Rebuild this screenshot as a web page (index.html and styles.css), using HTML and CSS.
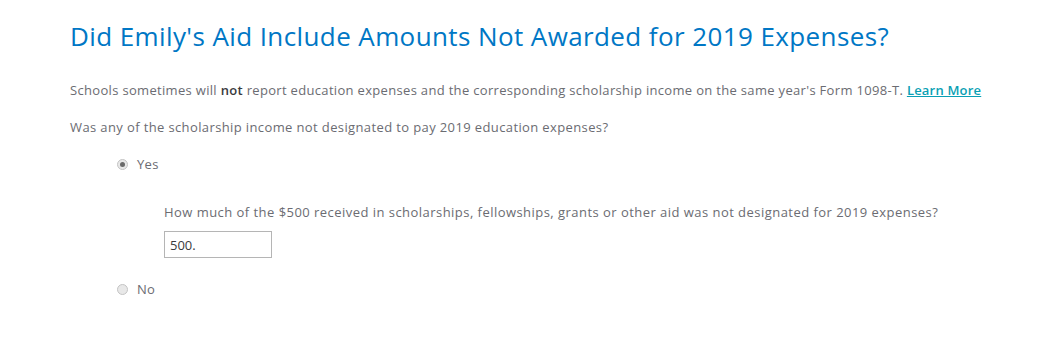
FILE: index.html
```html
<!DOCTYPE html>
<html lang="en">
<head>
    <meta charset="UTF-8">
    <title>Scholarship Aid</title>
    <link rel="stylesheet" href="styles.css">
</head>
<body>
    <div class="page">
        <h1 class="title">Did Emily's Aid Include Amounts Not Awarded for 2019 Expenses?</h1>
        <p class="intro">Schools sometimes will <b>not</b> report education expenses and the corresponding scholarship income on the same year's Form 1098-T. <a href="#">Learn More</a></p>
        <p class="question">Was any of the scholarship income not designated to pay 2019 education expenses?</p>
        <div class="choices">
            <label class="choice">
                <input type="radio" name="aid" checked>
                <span>Yes</span>
            </label>
            <div class="followup">
                <p class="question">How much of the $500 received in scholarships, fellowships, grants or other aid was not designated for 2019 expenses?</p>
                <input class="amount" type="text" value="500.">
            </div>
            <label class="choice">
                <input type="radio" name="aid">
                <span>No</span>
            </label>
        </div>
    </div>
</body>
</html>
```

FILE: styles.css
```css
body {
    margin: 0;
    padding: 0;
    background: #fff;
    font-family: "Open Sans", "Noto Sans", sans-serif;
    color: #6b6c72;
}
.page {
    padding: 18px 40px 0 70px;
}
.title {
    margin: 0;
    font-size: 26px;
    font-weight: 400;
    color: #0077c5;
    line-height: 36px;
    letter-spacing: 0.4px;
}
.intro {
    margin: 27px 0 0;
    font-size: 13px;
    line-height: 18px;
    letter-spacing: 0.32px;
    white-space: nowrap;
}
.intro b {
    color: #393a3d;
    font-weight: 600;
}
.intro a {
    color: #0a9fb4;
    font-weight: 600;
    letter-spacing: 0.2px;
}
.question {
    margin: 19px 0 0;
    font-size: 13px;
    line-height: 18px;
    letter-spacing: 0.38px;
}
.choices {
    padding-left: 47px;
    margin-top: 19px;
}
.choice {
    display: flex;
    align-items: center;
    gap: 9px;
    font-size: 13px;
    letter-spacing: 0.3px;
}
.choice input {
    appearance: none;
    margin: 0;
    width: 11px;
    height: 11px;
    border: 1px solid #c4c4c4;
    border-radius: 50%;
    background: #e8e8e8;
    position: relative;
}
.choice input:checked::after {
    content: "";
    position: absolute;
    left: 2px;
    top: 2px;
    width: 5px;
    height: 5px;
    border-radius: 50%;
    background: #6a6a6a;
}
.followup {
    padding: 30px 0 22px 47px;
}
.followup .question {
    margin: 0;
    letter-spacing: 0.46px;
}
.amount {
    margin-top: 10px;
    width: 108px;
    height: 27px;
    box-sizing: border-box;
    border: 1px solid #b5b5b5;
    padding: 0 5px;
    font-family: inherit;
    font-size: 13px;
    color: #393a3d;
}
```
